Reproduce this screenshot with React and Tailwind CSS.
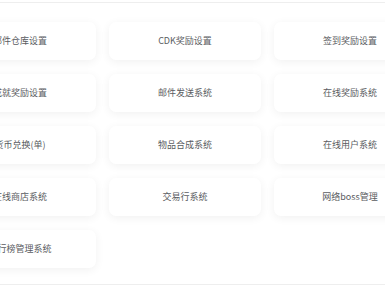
export default function App() {
  const items = [
    "邮件仓库设置",
    "CDK奖励设置",
    "签到奖励设置",
    "成就奖励设置",
    "邮件发送系统",
    "在线奖励系统",
    "货币兑换(单)",
    "物品合成系统",
    "在线用户系统",
    "在线商店系统",
    "交易行系统",
    "网络boss管理",
    "排行榜管理系统",
  ];
  return (
    <div className="w-[385px] h-[285px] overflow-hidden bg-white">
      <div className="mt-[2px] h-[283px] border-t border-b border-[#eeeeee] overflow-hidden">
        <div className="ml-[-56px] pt-[19px] grid grid-cols-[152px_152px_152px] gap-x-[13px] gap-y-[14px]">
          {items.map((t) => (
            <div
              key={t}
              className="h-[38px] rounded-[7px] bg-white shadow-[0_2px_10px_rgba(0,0,0,0.06)] flex items-center justify-center text-[9px] text-[#5a5c61] whitespace-nowrap"
              style={{ fontFamily: '"Noto Sans CJK SC", "Noto Sans", sans-serif' }}
            >
              {t}
            </div>
          ))}
        </div>
      </div>
    </div>
  );
}
